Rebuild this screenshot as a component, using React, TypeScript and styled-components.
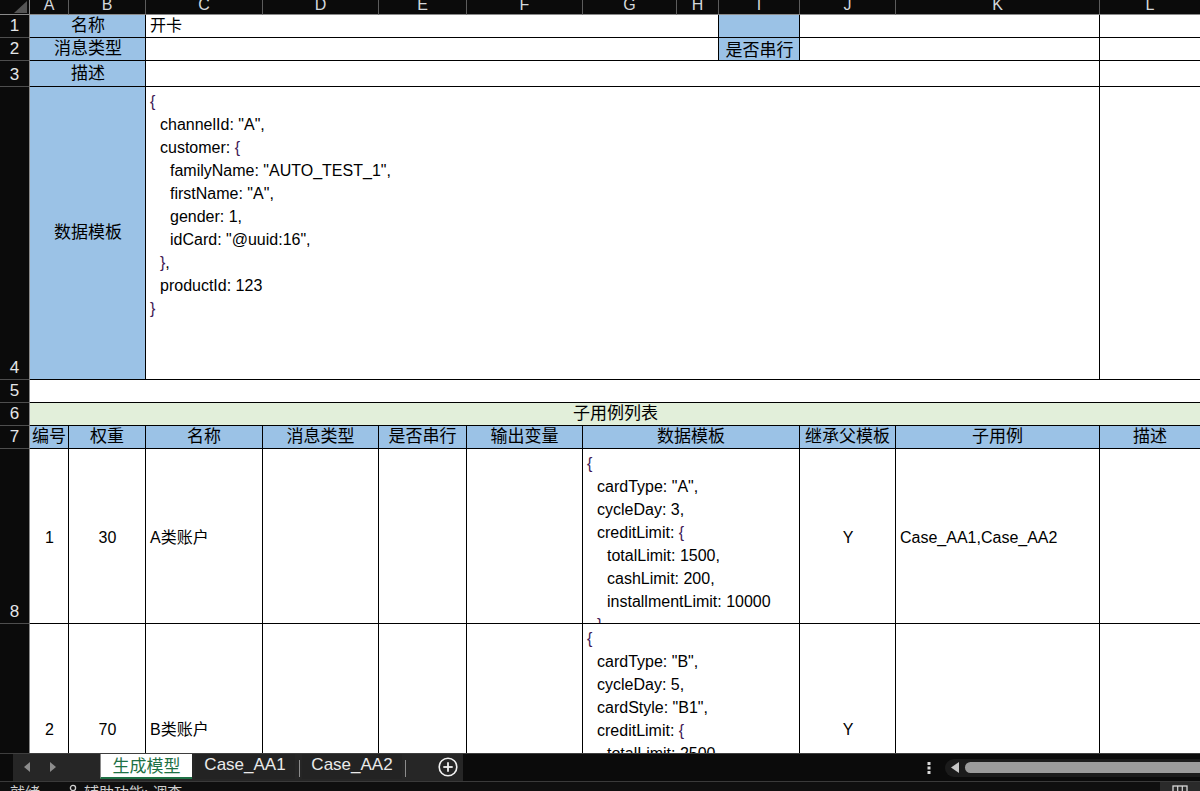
import React from "react";
import styled, { createGlobalStyle } from "styled-components";

const FONT = `"Liberation Sans", "Noto Sans CJK SC", Arial, sans-serif`;

const GlobalStyle = createGlobalStyle`
  html, body { margin: 0; padding: 0; width: 100%; height: 100%; overflow: hidden; background: #0b0b0b; }
  #root { width: 1200px; height: 791px; }
  * { box-sizing: border-box; }
`;

const Window = styled.div`
  width: 1200px;
  height: 791px;
  display: flex;
  flex-direction: column;
  overflow: hidden;
  font-family: ${FONT};
  background: #0b0b0b;
`;

const Sheet = styled.div`
  flex: 1;
  min-height: 0;
  overflow: hidden;
  display: grid;
  grid-template-columns: 30px 39px 77px 117px 116px 88px 116px 94px 42px 81px 96px 204px 100px;
  grid-template-rows: 15px 23px 23px 26px 293px 23px 23px 23px 175px 212px;
  background: #fff;
`;

const Corner = styled.div`
  grid-column: 1 / 2;
  grid-row: 1 / 2;
  background: #0b0b0b;
  border-right: 1px solid #8a8a8a;
  border-bottom: 1px solid #8a8a8a;
  display: flex;
  justify-content: flex-end;
  align-items: flex-end;
  padding: 0 2px 1px 0;
`;

const ColHead = styled.div<{ $last?: boolean }>`
  background: #0b0b0b;
  color: #d4d8dc;
  font-size: 16px;
  line-height: 16px;
  border-right: ${(p) => (p.$last ? "none" : "1px solid #5c5c5c")};
  border-bottom: 1px solid #8a8a8a;
  display: flex;
  justify-content: center;
  align-items: flex-end;
  overflow: hidden;
  padding-bottom: 1px;
`;

const RowHead = styled.div<{ $row: number }>`
  grid-column: 1 / 2;
  grid-row: ${(p) => p.$row} / ${(p) => p.$row + 1};
  background: #0b0b0b;
  color: #e4e6e8;
  font-size: 17px;
  line-height: 20px;
  border-right: 1px solid #8a8a8a;
  border-bottom: 1px solid #4e4e4e;
  display: flex;
  justify-content: center;
  align-items: flex-end;
  overflow: hidden;
  padding-bottom: 1px;
`;

type CellProps = {
  $col: string;
  $row: number;
  $left?: boolean;
  $bottom?: boolean;
  $top?: boolean;
  $open?: boolean;
};

const BaseCell = styled.div<CellProps>`
  grid-column: ${(p) => p.$col};
  grid-row: ${(p) => p.$row} / ${(p) => p.$row + 1};
  background: #fff;
  color: #000;
  border-right: ${(p) => (p.$open ? "none" : "1px solid #000")};
  border-bottom: 1px solid #000;
  display: flex;
  justify-content: ${(p) => (p.$left ? "flex-start" : "center")};
  align-items: ${(p) => (p.$top ? "flex-start" : p.$bottom ? "flex-end" : "center")};
  padding: 0 3px 0 4px;
  overflow: hidden;
  white-space: nowrap;
  font-size: 16px;
  line-height: 20px;
`;

const LabelCell = styled(BaseCell)`
  background: #9bc2e6;
  font-size: 17px;
`;

const HeaderCell = styled(BaseCell)`
  background: #9bc2e6;
  font-size: 17px;
  padding: 0 1px;
`;

const SectionCell = styled(BaseCell)`
  background: #e2efda;
  font-size: 17px;
`;

const ValueCell = styled(BaseCell)``;

const RecordCell = styled(BaseCell)`
  padding-top: 3px;
`;

const CodeCell = styled(BaseCell)`
  flex-direction: column;
  justify-content: flex-start;
  align-items: flex-start;
  padding: 3px 3px 0 4px;
`;

const CodeLine = styled.div<{ $level: number }>`
  padding-left: ${(p) => p.$level * 10}px;
  height: 23px;
  line-height: 23px;
  font-size: 16px;
  flex: none;
`;

const Brace = styled.span`
  color: #3f1a55;
`;

const BottomText = styled.span`
  margin-bottom: -1px;
`;

/* ---------- tab bar ---------- */

const TabBar = styled.div`
  height: 28px;
  flex: none;
  display: flex;
  align-items: stretch;
  background: #0b0b0b;
  border-top: 1px solid #3e3e3e;
`;

const TabStrip = styled.div`
  margin-left: 13px;
  width: 450px;
  display: flex;
  align-items: stretch;
  background: #262626;
  padding-bottom: 2px;
`;

const NavArrows = styled.div`
  width: 87px;
  display: flex;
  align-items: center;
  padding-left: 11px;
  gap: 20px;
`;

const ActiveTab = styled.div`
  width: 92px;
  background: #fff;
  color: #1e7145;
  font-size: 17px;
  display: flex;
  align-items: center;
  justify-content: center;
  border-bottom: 2px solid #1e7145;
  border-left: 1px solid #8a8a8a;
  padding-bottom: 2px;
`;

const Tab = styled.div<{ $gap: number }>`
  width: 100px;
  margin-left: ${(p) => p.$gap}px;
  color: #eaeaea;
  font-size: 17px;
  display: flex;
  align-items: center;
  justify-content: center;
  background: #232323;
  padding-bottom: 3px;
`;

const TabSep = styled.div<{ $before: number; $after: number }>`
  width: 1px;
  margin: 6px ${(p) => p.$after}px 2px ${(p) => p.$before}px;
  background: #8c8c8c;
`;

const AddArea = styled.div`
  flex: 1;
  display: flex;
  align-items: center;
  justify-content: flex-end;
  padding-right: 5px;
`;

const Spacer = styled.div`
  flex: 1;
`;

const Dots = styled.div`
  width: 10px;
  margin-right: 11px;
  display: flex;
  align-items: center;
  justify-content: center;
`;

const ScrollTrack = styled.div`
  width: 255px;
  height: 18px;
  align-self: center;
  background: #1b1b1b;
  border-radius: 9px 0 0 9px;
  display: flex;
  align-items: center;
  padding-left: 6px;
`;

const ScrollThumb = styled.div`
  flex: 1;
  height: 11px;
  margin-left: 6px;
  background: #9b9b9b;
  border-radius: 6px 0 0 6px;
`;

const StatusBar = styled.div`
  height: 10px;
  flex: none;
  background: #0f0f0f;
  border-top: 1px solid #3a3a3a;
  display: flex;
  align-items: flex-start;
  overflow: hidden;
  color: #d0d0d0;
  font-size: 15px;
  line-height: 18px;
  padding-left: 10px;
`;

const StatusItem = styled.span<{ $gap: number }>`
  margin-left: ${(p) => p.$gap}px;
  margin-top: 2px;
  display: flex;
  align-items: flex-start;
  gap: 4px;
  white-space: nowrap;
`;

const StatusRight = styled.div`
  margin-left: auto;
  width: 40px;
  height: 100%;
  background: #2a2a2a;
  display: flex;
  justify-content: center;
  padding-top: 3px;
`;

/* ---------- data ---------- */

const columns = ["A", "B", "C", "D", "E", "F", "G", "H", "I", "J", "K", "L"];

type Line = { level: number; text: React.ReactNode };

const b = (s: string) => <Brace>{s}</Brace>;

const mainTemplate: Line[] = [
  { level: 0, text: b("{") },
  { level: 1, text: 'channelId: "A",' },
  { level: 1, text: <>customer: {b("{")}</> },
  { level: 2, text: 'familyName: "AUTO_TEST_1",' },
  { level: 2, text: 'firstName: "A",' },
  { level: 2, text: "gender: 1," },
  { level: 2, text: 'idCard: "@uuid:16",' },
  { level: 1, text: <>{b("}")},</> },
  { level: 1, text: "productId: 123" },
  { level: 0, text: b("}") },
];

const templateA: Line[] = [
  { level: 0, text: b("{") },
  { level: 1, text: 'cardType: "A",' },
  { level: 1, text: "cycleDay: 3," },
  { level: 1, text: <>creditLimit: {b("{")}</> },
  { level: 2, text: "totalLimit: 1500," },
  { level: 2, text: "cashLimit: 200," },
  { level: 2, text: "installmentLimit: 10000" },
  { level: 1, text: b("}") },
  { level: 0, text: b("}") },
];

const templateB: Line[] = [
  { level: 0, text: b("{") },
  { level: 1, text: 'cardType: "B",' },
  { level: 1, text: "cycleDay: 5," },
  { level: 1, text: 'cardStyle: "B1",' },
  { level: 1, text: <>creditLimit: {b("{")}</> },
  { level: 2, text: "totalLimit: 2500," },
  { level: 2, text: "cashLimit: 500," },
  { level: 2, text: "installmentLimit: 20000" },
  { level: 1, text: b("}") },
  { level: 0, text: b("}") },
];

const Code = ({ lines }: { lines: Line[] }) => (
  <>
    {lines.map((l, i) => (
      <CodeLine key={i} $level={l.level}>
        {l.text}
      </CodeLine>
    ))}
  </>
);

const subHeaders: { col: string; label: string; open?: boolean }[] = [
  { col: "2 / 3", label: "编号" },
  { col: "3 / 4", label: "权重" },
  { col: "4 / 5", label: "名称" },
  { col: "5 / 6", label: "消息类型" },
  { col: "6 / 7", label: "是否串行" },
  { col: "7 / 8", label: "输出变量" },
  { col: "8 / 11", label: "数据模板" },
  { col: "11 / 12", label: "继承父模板" },
  { col: "12 / 13", label: "子用例" },
  { col: "13 / 14", label: "描述", open: true },
];

const TriangleCorner = () => (
  <svg width="13" height="12" viewBox="0 0 13 12">
    <polygon points="13,0 13,12 0,12" fill="#555" />
  </svg>
);

const ArrowLeft = () => (
  <svg width="6" height="10" viewBox="0 0 6 10">
    <polygon points="6,0 6,10 0,5" fill="#8c8c8c" />
  </svg>
);

const ArrowRight = () => (
  <svg width="6" height="10" viewBox="0 0 6 10">
    <polygon points="0,0 0,10 6,5" fill="#8c8c8c" />
  </svg>
);

const PlusCircle = () => (
  <svg width="20" height="20" viewBox="0 0 20 20">
    <circle cx="10" cy="10" r="8.8" fill="none" stroke="#f2f2f2" strokeWidth="1.6" />
    <line x1="10" y1="5.3" x2="10" y2="14.7" stroke="#f2f2f2" strokeWidth="1.8" />
    <line x1="5.3" y1="10" x2="14.7" y2="10" stroke="#f2f2f2" strokeWidth="1.8" />
  </svg>
);

const VDots = () => (
  <svg width="4" height="12" viewBox="0 0 4 12">
    <rect x="0.5" y="0" width="3" height="3" fill="#d8d8d8" />
    <rect x="0.5" y="4.5" width="3" height="3" fill="#d8d8d8" />
    <rect x="0.5" y="9" width="3" height="3" fill="#d8d8d8" />
  </svg>
);

const ScrollLeft = () => (
  <svg width="8" height="11" viewBox="0 0 8 11">
    <polygon points="8,0 8,11 0,5.5" fill="#c8c8c8" />
  </svg>
);

const AccessIcon = () => (
  <svg width="14" height="14" viewBox="0 0 14 14">
    <circle cx="7" cy="4" r="2.6" fill="none" stroke="#d0d0d0" strokeWidth="1.3" />
    <path d="M2 9 L12 9" stroke="#d0d0d0" strokeWidth="1.3" />
  </svg>
);

const GridIcon = () => (
  <svg width="16" height="8" viewBox="0 0 16 8">
    <rect x="1" y="1" width="14" height="10" fill="none" stroke="#d8d8d8" strokeWidth="1.3" />
    <line x1="5.7" y1="1" x2="5.7" y2="8" stroke="#d8d8d8" strokeWidth="1.2" />
    <line x1="10.3" y1="1" x2="10.3" y2="8" stroke="#d8d8d8" strokeWidth="1.2" />
  </svg>
);

export default function App() {
  return (
    <Window>
      <GlobalStyle />
      <Sheet>
        <Corner>
          <TriangleCorner />
        </Corner>
        {columns.map((c, i) => (
          <ColHead key={c} $last={i === columns.length - 1}>
            {c}
          </ColHead>
        ))}
        {[1, 2, 3, 4, 5, 6, 7, 8, 9].map((n) => (
          <RowHead key={n} $row={n + 1}>
            {n}
          </RowHead>
        ))}

        {/* row 1 */}
        <LabelCell $col="2 / 4" $row={2}>名称</LabelCell>
        <ValueCell $col="4 / 10" $row={2} $left>开卡</ValueCell>
        <LabelCell $col="10 / 11" $row={2} />
        <ValueCell $col="11 / 13" $row={2} />
        <ValueCell $col="13 / 14" $row={2} $open />

        {/* row 2 */}
        <LabelCell $col="2 / 4" $row={3}>消息类型</LabelCell>
        <ValueCell $col="4 / 10" $row={3} />
        <LabelCell $col="10 / 11" $row={3} $bottom>
          <BottomText>是否串行</BottomText>
        </LabelCell>
        <ValueCell $col="11 / 13" $row={3} />
        <ValueCell $col="13 / 14" $row={3} $open />

        {/* row 3 */}
        <LabelCell $col="2 / 4" $row={4}>描述</LabelCell>
        <ValueCell $col="4 / 13" $row={4} />
        <ValueCell $col="13 / 14" $row={4} $open />

        {/* row 4 */}
        <LabelCell $col="2 / 4" $row={5}>数据模板</LabelCell>
        <CodeCell $col="4 / 13" $row={5}>
          <Code lines={mainTemplate} />
        </CodeCell>
        <ValueCell $col="13 / 14" $row={5} $open />

        {/* row 5 */}
        <ValueCell $col="2 / 14" $row={6} $open />

        {/* row 6 */}
        <SectionCell $col="2 / 14" $row={7} $open>子用例列表</SectionCell>

        {/* row 7 */}
        {subHeaders.map((h) => (
          <HeaderCell key={h.label} $col={h.col} $row={8} $open={h.open}>
            {h.label}
          </HeaderCell>
        ))}

        {/* row 8 */}
        <RecordCell $col="2 / 3" $row={9}>1</RecordCell>
        <RecordCell $col="3 / 4" $row={9}>30</RecordCell>
        <RecordCell $col="4 / 5" $row={9} $left>A类账户</RecordCell>
        <ValueCell $col="5 / 6" $row={9} />
        <ValueCell $col="6 / 7" $row={9} />
        <ValueCell $col="7 / 8" $row={9} />
        <CodeCell $col="8 / 11" $row={9}>
          <Code lines={templateA} />
        </CodeCell>
        <RecordCell $col="11 / 12" $row={9}>Y</RecordCell>
        <RecordCell $col="12 / 13" $row={9} $left>Case_AA1,Case_AA2</RecordCell>
        <ValueCell $col="13 / 14" $row={9} $open />

        {/* row 9 */}
        <ValueCell $col="2 / 3" $row={10}>2</ValueCell>
        <ValueCell $col="3 / 4" $row={10}>70</ValueCell>
        <ValueCell $col="4 / 5" $row={10} $left>B类账户</ValueCell>
        <ValueCell $col="5 / 6" $row={10} />
        <ValueCell $col="6 / 7" $row={10} />
        <ValueCell $col="7 / 8" $row={10} />
        <CodeCell $col="8 / 11" $row={10}>
          <Code lines={templateB} />
        </CodeCell>
        <ValueCell $col="11 / 12" $row={10}>Y</ValueCell>
        <ValueCell $col="12 / 13" $row={10} $left />
        <ValueCell $col="13 / 14" $row={10} $open />
      </Sheet>

      <TabBar>
        <TabStrip>
          <NavArrows>
            <ArrowLeft />
            <ArrowRight />
          </NavArrows>
          <ActiveTab>生成模型</ActiveTab>
          <Tab $gap={3}>Case_AA1</Tab>
          <TabSep $before={4} $after={2} />
          <Tab $gap={0}>Case_AA2</Tab>
          <TabSep $before={3} $after={0} />
          <AddArea>
            <PlusCircle />
          </AddArea>
        </TabStrip>
        <Spacer />
        <Dots>
          <VDots />
        </Dots>
        <ScrollTrack>
          <ScrollLeft />
          <ScrollThumb />
        </ScrollTrack>
      </TabBar>

      <StatusBar>
        <StatusItem $gap={0}>就绪</StatusItem>
        <StatusItem $gap={26}>
          <AccessIcon />
          辅助功能: 调查
        </StatusItem>
        <StatusRight>
          <GridIcon />
        </StatusRight>
      </StatusBar>
    </Window>
  );
}
